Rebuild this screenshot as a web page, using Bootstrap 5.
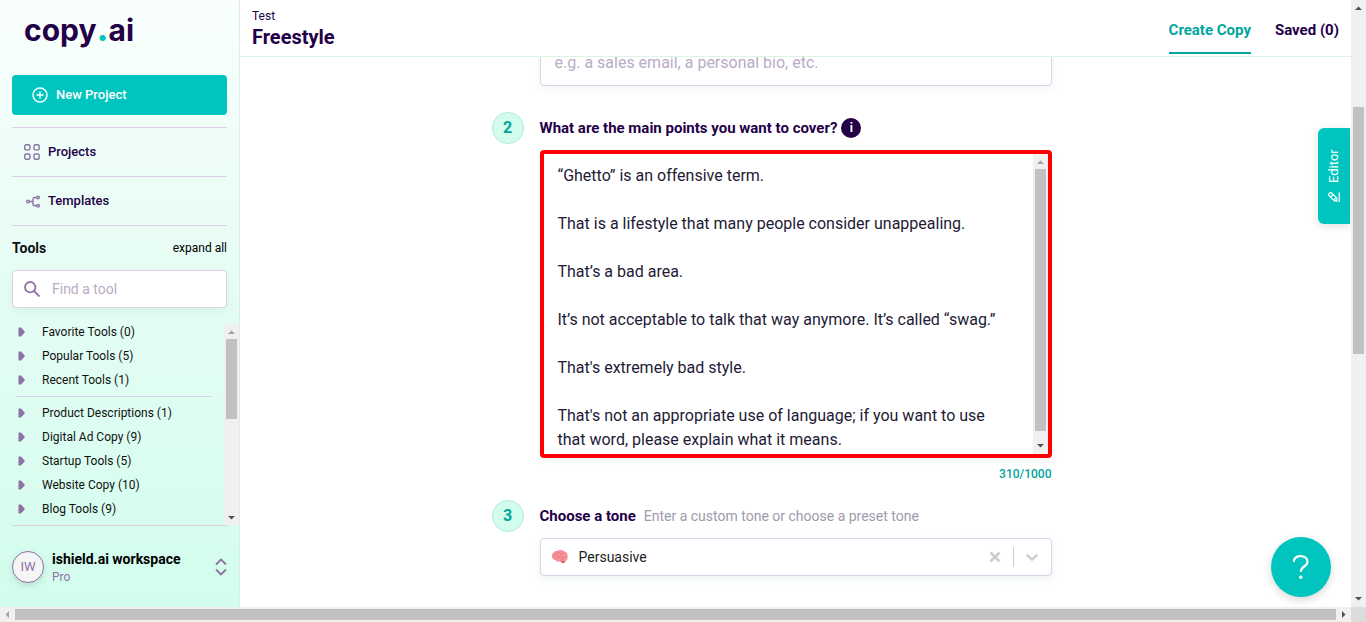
<!DOCTYPE html>
<html lang="en">
<head>
<meta charset="utf-8">
<meta name="viewport" content="width=device-width, initial-scale=1">
<title>Freestyle – copy.ai</title>
<link rel="stylesheet" href="https://cdn.jsdelivr.net/npm/bootstrap@5.3.0/dist/css/bootstrap.min.css">
<style>
:root{--ink:#240047;--teal:#00c5be;--teal-dark:#00a69c;--violet:#8f72a5;--line:#dccfe6;--mint:#d2fdec}
body{font-family:Roboto,"Liberation Sans",sans-serif;font-size:12px;line-height:16px;color:#111;overflow:hidden}
a{text-decoration:none}
svg{display:block;flex:none}
.shell{display:grid;grid-template:minmax(0,1fr) 15px / minmax(0,1fr) 15px;height:100vh}
/* scrollbars */
.sbar{display:flex;background:#f0f0f0;flex:none}
.sbar-v{flex-direction:column;width:15px}
.sbar-h{height:15px}
.sbar svg{width:15px;height:15px;fill:#505050}
.sbar svg.off{fill:#a3a3a3}
.thumb{background:#c1c1c1}
.sbar-v .thumb{margin:0 2px}
.sbar-h .thumb{margin:2px 0;flex:1}
.corner{background:#dcdcdc}
.page-before{flex:92}.page-thumb{flex:247}.page-after{flex:238}
/* sidebar */
.side{width:240px;flex:none;border-right:1px solid #d9efe9;background:linear-gradient(180deg,#fafffd 0,#ecfdf6 30%,#dffdf2 65%,var(--mint) 100%)}
.brand{font-family:Inter,Roboto,sans-serif;font-weight:700;font-size:30px;line-height:40px;color:var(--ink);padding:10px 0 0 24px;margin-bottom:25px}
.brand span{color:var(--teal);font-size:36px;line-height:1px}
.btn-new{background:var(--teal);color:#fff;height:40px;border:0;border-radius:4px;font-size:13px;font-weight:500;padding:0 20px}
.btn-new:hover{background:var(--teal);color:#fff}
.nav-row{display:flex;align-items:center;height:48px;gap:8px;padding-left:12px;color:var(--ink);font-size:13px;font-weight:500}
.rule{border-top:1px solid var(--line)}
.tools-head{height:45px}
.tools-title{font-size:14px;font-weight:700}
.find{height:38px;background:#fff;border:1px solid var(--line);border-radius:4px;box-shadow:0 3px 8px rgba(0,100,90,.07);gap:12px;padding:0 11px}
.find input{border:0;outline:0;width:100%;min-width:0;font-size:14px;background:none;padding:0}
::placeholder{color:#b9acc6!important;opacity:1}
.tool-wrap{margin-top:12px;padding-left:12px}
.tool-wrap .sbar{margin-top:4px}
.tool-list{flex:1;min-width:0;padding-right:13px}
.tool-list button{display:flex;align-items:center;gap:16px;width:100%;height:24px;border:0;background:none;padding:0 0 0 6px;color:#111;font-size:12px;line-height:16px}
.tool-list .rule{margin:4px 0 4px 4px}
.avatar{width:32px;height:32px;border:1px solid var(--violet);border-radius:50%;background:#f5f5f6;color:var(--violet);font-size:13px;display:grid;place-items:center;box-shadow:0 3px 6px rgba(0,60,50,.14);flex:none}
.ws-name{font-size:14px;font-weight:700;line-height:20px}
.ws-plan{color:var(--violet)}
.account{background:none;border:0;padding:24px 12px;height:81px;gap:8px}
/* header */
.top{height:57px;flex:none;border-bottom:1px solid #dcf3e6;background:#fff;color:var(--ink);padding:0 12px}
.top h1{font-size:20px;line-height:26px;font-weight:700;margin:0}
.tabs{gap:24px}
.tabs a{display:block;color:var(--ink);font-size:15px;font-weight:700;line-height:20px;padding:20px 0 12px;height:54px}
.tabs a.current{color:var(--teal-dark);border-bottom:2px solid var(--teal-dark)}
/* form */
.work{flex:1;min-height:0;overflow:hidden}
.form-col{width:608px;max-width:100%;margin:-18px auto 0;padding-right:48px}
.step{display:grid;grid-template-columns:32px minmax(0,1fr);column-gap:16px}
.step-body{grid-column:2}
.first-box{height:47px;padding:0 12px}
.step-two{margin-top:26px;row-gap:6px}
.num{width:32px;height:32px;border:1px solid #b0ebe1;border-radius:50%;background:var(--mint);color:var(--teal-dark);font-size:16px;font-weight:700;display:grid;place-items:center}
.q{font-size:15px;line-height:20px;font-weight:700;color:var(--ink)}
.boxed{border:1px solid var(--line);border-radius:4px;background:#fff;box-shadow:0 3px 8px rgba(0,100,90,.07)}
.boxed input{border:0;outline:0;background:none;width:100%;min-width:0;font-size:16px}
.info{width:20px;height:20px;border:0;padding:0;border-radius:50%;background:var(--ink);color:#fff;font-weight:700;font-size:12px;line-height:20px}
.points{border:4px solid red;height:308px}
.points textarea{flex:1;min-width:0;border:0;outline:0;resize:none;overflow:hidden;padding:10px 32px 0 14px;font-size:16px;line-height:24px;color:#231a35}
.points .thumb{flex:1}
.count{color:var(--teal-dark);font-size:12px;font-weight:500;line-height:16px;margin:8px 0 18px}
.hint{font-size:14px;color:#9b9bad}
.tone{height:38px;margin-top:6px;padding:0 9px 0 10px}
.tone input{font-size:14px;color:#222}
.plain{border:0;background:none;padding:0}
.bar{width:1px;height:20px;background:#ccc;flex:none}
.editor{position:absolute;right:1px;top:128px;width:32px;height:96px;border:0;border-radius:6px 0 0 6px;background:var(--teal);color:#fff;font-size:13px;box-shadow:0 2px 8px rgba(0,0,0,.12);writing-mode:vertical-rl;padding:0}
.editor span{display:flex;align-items:center;gap:8px;transform:rotate(180deg);justify-content:center;width:32px;height:96px}
.help{position:absolute;right:20px;bottom:10px;width:60px;height:60px;border:0;border-radius:50%;background:var(--teal);display:grid;place-items:center;box-shadow:0 3px 8px rgba(0,0,0,.16)}
</style>
</head>
<body>
<div class="shell">
  <div class="d-flex position-relative overflow-hidden">
    <aside class="side d-flex flex-column">
      <div class="brand">copy<span>.</span>ai</div>
      <div class="px-2 mx-1">
        <button class="btn btn-new d-flex align-items-center gap-2 w-100 mb-2" type="button">
          <svg width="16" height="16" viewBox="0 0 16 16" fill="none" stroke="#fff" stroke-width="1.4"><circle cx="8" cy="8" r="7"/><path d="M8 4.5v7M4.5 8h7"/></svg>
          New Project
        </button>
        <nav class="pt-1">
          <div class="rule"><a class="nav-row" href="#">
            <svg width="16" height="16" viewBox="0 0 16 16" fill="none" stroke="#8f72a5" stroke-width="1.4"><rect x=".7" y=".7" width="5.2" height="5.2" rx="1.5"/><rect x="10" y=".7" width="5.2" height="5.2" rx="1.5"/><rect x=".7" y="10" width="5.2" height="5.2" rx="1.5"/><rect x="10" y="10" width="5.2" height="5.2" rx="1.5"/></svg>
            Projects</a></div>
          <div class="rule"><a class="nav-row" href="#">
            <svg width="16" height="16" viewBox="0 0 16 16" fill="none" stroke="#8f72a5" stroke-width="1.4"><circle cx="4" cy="8.500" r="1.4"/><circle cx="14" cy="4.500" r="1.3"/><circle cx="14" cy="12.800" r="1.3"/><path d="M5.400 8.500H9M12.600 4.500h-1.800Q9 4.500 9 6v5q0 1.800 1.800 1.800h1.800"/></svg>
            Templates</a></div>
        </nav>
        <div class="rule tools-head d-flex justify-content-between align-items-center">
          <span class="tools-title">Tools</span>
          <a href="#" class="text-black">expand all</a>
        </div>
        <label class="find d-flex align-items-center">
          <svg width="16" height="16" viewBox="0 0 16 16" fill="none" stroke="#8f72a5" stroke-width="1.8"><circle cx="6.200" cy="6.200" r="5.200"/><path d="M10 10l5.500 5.500"/></svg>
          <input type="text" placeholder="Find a tool" aria-label="Find a tool">
        </label>
      </div>
      <div class="tool-wrap d-flex flex-fill overflow-hidden">
        <div class="tool-list" id="tools"></div>
        <div class="sbar sbar-v"><svg class="off" viewBox="0 0 15 15"><path d="M4 10h7L7.500 6.500z"/></svg><div class="thumb" style="height:40%"></div><svg class="mt-auto" viewBox="0 0 15 15"><path d="M4 6h7L7.500 9.500z"/></svg></div>
      </div>
      <div class="px-2 mx-1"><div class="rule"></div></div>
      <button type="button" class="account d-flex align-items-center text-start">
        <span class="avatar">IW</span>
        <span class="flex-fill"><span class="ws-name d-block">ishield.ai workspace</span><span class="ws-plan">Pro</span></span>
        <svg width="12" height="18" viewBox="0 0 12 18" fill="none" stroke="#8f72a5" stroke-width="1.800"><path d="M1 6.500 6 1.500l5 5M1 11.500l5 5 5-5"/></svg>
      </button>
    </aside>

    <div class="d-flex flex-column flex-fill overflow-hidden">
      <header class="top d-flex justify-content-between">
        <div class="pt-2"><div>Test</div><h1>Freestyle</h1></div>
        <nav class="tabs d-flex"><a class="current" href="#">Create Copy</a><a href="#">Saved (0)</a></nav>
      </header>
      <main class="work">
        <form class="form-col">
          <div class="step"><div class="step-body boxed first-box d-flex align-items-center"><input type="text" placeholder="e.g. a sales email, a personal bio, etc." aria-label="What are you creating?"></div></div>
          <div class="step step-two">
            <div class="num">2</div>
            <div class="d-flex align-items-center gap-1"><label class="q" for="points">What are the main points you want to cover?</label><button type="button" class="info" aria-label="More information">i</button></div>
            <div class="step-body">
              <div class="boxed points d-flex">
                <textarea id="points">“Ghetto” is an offensive term.

That is a lifestyle that many people consider unappealing.

That’s a bad area.

It’s not acceptable to talk that way anymore. It’s called “swag.”

That's extremely bad style.

That's not an appropriate use of language; if you want to use that word, please explain what it means.</textarea>
                <div class="sbar sbar-v"><svg class="off" viewBox="0 0 15 15"><path d="M4 10h7L7.500 6.500z"/></svg><div class="thumb"></div><svg class="mt-2" viewBox="0 0 15 15"><path d="M4 5h7L7.500 8.500z"/></svg></div>
              </div>
              <div class="count text-end">310/1000</div>
            </div>
          </div>
          <div class="step">
            <div class="num">3</div>
            <div class="d-flex align-items-center gap-2"><label class="q" for="tone">Choose a tone</label><span class="hint">Enter a custom tone or choose a preset tone</span></div>
            <div class="step-body boxed tone d-flex align-items-center gap-2">
              <svg width="18" height="16" viewBox="0 0 18 16"><path d="M1 8C.5 4.500 3 2 6 2c2-1.500 6-1 7.500.5C16 3 17.300 6 16.500 8.500c.3 2-1 3.500-2.500 3.500-1 2.500-3.500 2.500-5 .5-2 .5-4-.3-4.500-1.500C2.500 11 1.200 9.500 1 8z" fill="#f98f98"/><path d="M10 12.500c1.300 2 3.800 2 4.500-.5z" fill="#c9505f"/><path d="M3 7c1-1.800 2.500-.5 3-2s2-1.500 3-.5 2.500-.8 3.500.5M5 9.500c1-1.500 2-.3 3-1.500s2.500-.5 3 .5 2 .3 3-.8M9 12c.4-1.300 2-1.200 3-.8" fill="none" stroke="#e0707e" stroke-width=".7"/></svg>
              <input id="tone" type="text" value="Persuasive">
              <button type="button" class="plain" aria-label="Clear tone"><svg width="12" height="12" viewBox="0 0 12 12" stroke="#ccc" stroke-width="2.600" fill="none"><path d="M1.500 1.500l9 9M10.500 1.500l-9 9"/></svg></button>
              <span class="bar ms-1"></span>
              <button type="button" class="plain ms-1 pe-1" aria-label="Show tones"><svg width="12" height="12" viewBox="0 0 12 12" stroke="#ccc" stroke-width="2.400" fill="none"><path d="M.7 3.500 6 8.500l5.300-5"/></svg></button>
            </div>
          </div>
        </form>
      </main>
    </div>

    <button type="button" class="editor"><span>
      <svg width="12" height="12" viewBox="0 0 12 12" fill="none" stroke="#fff" stroke-width="1.200" stroke-linejoin="round"><path d="M.8 1v9.500M3 1.800 3.400 5l5 5q1.200.8 2.300-.3t.2-2.300l-5-5zM3.400 5Q5 5 5.900 2.400M7 8.600 9.500 6.100"/></svg>Editor</span></button>
    <button type="button" class="help" aria-label="Help"><svg width="20" height="28" viewBox="0 0 20 28" fill="none" stroke="#fff" stroke-width="2.200" stroke-linecap="round"><path d="M3 8C3.300 5 6 3.200 9.500 3.200c4 0 7 2 7 5.600 0 4.700-6.500 4.700-6.500 9.200"/><circle cx="9.800" cy="24.200" r="1" fill="#fff" stroke-width="1.600"/></svg></button>
  </div>
  <div class="sbar sbar-v"><svg viewBox="0 0 15 15"><path d="M4 10h7L7.500 6.500z"/></svg><div class="page-before"></div><div class="thumb page-thumb"></div><div class="page-after"></div><svg viewBox="0 0 15 15"><path d="M4 5h7L7.500 8.500z"/></svg></div>
  <div class="sbar sbar-h"><svg class="off" viewBox="0 0 15 15"><path d="M9 4v7L5.500 7.500z"/></svg><div class="thumb"></div><svg viewBox="0 0 15 15"><path d="M6 4v7l3.500-3.500z"/></svg></div>
  <div class="corner"></div>
</div>
<script src="https://cdn.jsdelivr.net/npm/bootstrap@5.3.0/dist/js/bootstrap.bundle.min.js"></script>
<script>
const arrow = '<svg width="8" height="10" viewBox="0 0 8 10"><path d="M.5.500h2.500L6.500 4.200v1.600L3 9.500H.5z" fill="#8f72a5"/></svg>';
const groups = [['Favorite Tools (0)','Popular Tools (5)','Recent Tools (1)'],
  ['Product Descriptions (1)','Digital Ad Copy (9)','Startup Tools (5)','Website Copy (10)','Blog Tools (9)']];
document.getElementById('tools').innerHTML = groups.map(g =>
  g.map(t => `<button type="button">${arrow}<span>${t}</span></button>`).join('')).join('<div class="rule"></div>');
const points = document.getElementById('points');
points.focus({preventScroll:true});
points.setSelectionRange(points.value.length, points.value.length);
</script>
</body>
</html>
